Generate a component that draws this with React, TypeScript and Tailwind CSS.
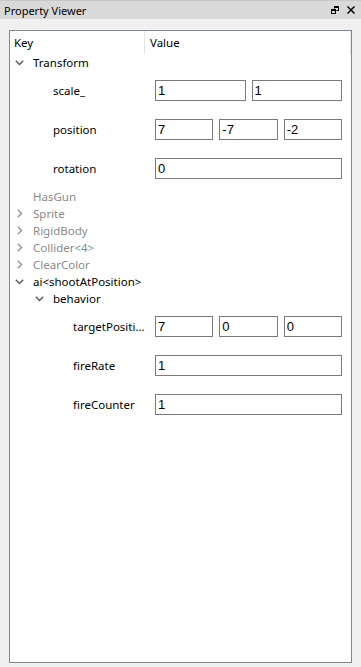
import React from "react";

const FONT = { fontFamily: '"Noto Sans", "Open Sans", sans-serif' };

function ChevDown({ color = "#5a5a5a" }: { color?: string }) {
  return (
    <svg width="9" height="6" viewBox="0 0 9 6" className="block">
      <path d="M0.8 0.8 L4.5 4.5 L8.2 0.8" fill="none" stroke={color} strokeWidth="1.5" />
    </svg>
  );
}
function ChevRight({ color = "#9a9a9a" }: { color?: string }) {
  return (
    <svg width="6" height="9" viewBox="0 0 6 9" className="block">
      <path d="M0.8 0.8 L4.5 4.5 L0.8 8.2" fill="none" stroke={color} strokeWidth="1.5" />
    </svg>
  );
}

type Chev = "down" | "right" | "none";

function TreeRow({ level, chev, label, dim }: { level: number; chev: Chev; label: string; dim?: boolean }) {
  return (
    <div className="flex h-[17px] items-center">
      <div className="flex h-full w-[135px] items-center overflow-hidden" style={{ paddingLeft: level * 20 }}>
        <div className="flex h-full w-[23px] shrink-0 items-center">
          {chev === "down" && (
            <div className="pl-[5px]">
              <ChevDown />
            </div>
          )}
          {chev === "right" && (
            <div className="pl-[7px]">
              <ChevRight />
            </div>
          )}
        </div>
        <span className={`whitespace-nowrap text-[11.5px] leading-none ${dim ? "text-[#8a8a8a]" : "text-black"}`}>
          {label}
        </span>
      </div>
    </div>
  );
}

function Field({ value }: { value: string }) {
  return (
    <div
      className="flex h-[21px] min-w-0 flex-1 items-center border border-[#7a7a7a] bg-white pl-[2px] text-[13px] leading-none text-black"
      style={{ fontFamily: '"Liberation Sans", Arial, sans-serif' }}
    >
      {value}
    </div>
  );
}

function PropRow({ level, label, values }: { level: number; label: string; values: string[] }) {
  return (
    <div className="flex h-[39px] items-center">
      <div className="flex w-[135px] items-center overflow-hidden" style={{ paddingLeft: level * 20 + 23 }}>
        <span className="whitespace-nowrap text-[11.5px] leading-[16px] text-black">{label}</span>
      </div>
      <div className="flex flex-1 gap-[6px] pl-[10px] pr-[9px]">
        {values.map((v, i) => (
          <Field key={i} value={v} />
        ))}
      </div>
    </div>
  );
}

export default function App() {
  return (
    <div className="flex h-[667px] w-[361px] flex-col bg-[#f0f0f0]" style={FONT}>
      <div className="flex h-[19px] shrink-0 items-center justify-between border-t border-[#c8c8c8] bg-[#d9d9d9] pl-[4px] pr-[6px]">
        <span className="text-[11px] leading-none text-black">Property Viewer</span>
        <div className="flex items-center gap-[8px]">
          <svg width="8" height="8" viewBox="0 0 8 8" className="block">
            <rect x="3.5" y="0.5" width="4" height="4" fill="none" stroke="#000" strokeWidth="1" />
            <rect x="3" y="0" width="5" height="2" fill="#000" />
            <rect x="0" y="2.5" width="5.5" height="5.5" fill="#d9d9d9" />
            <rect x="0.5" y="3.5" width="4" height="4" fill="none" stroke="#000" strokeWidth="1" />
            <rect x="0" y="3" width="5" height="2" fill="#000" />
          </svg>
          <svg width="8" height="8" viewBox="0 0 8 8" className="block">
            <path d="M0.5 0.5 L7.5 7.5 M7.5 0.5 L0.5 7.5" stroke="#000" strokeWidth="1.5" />
          </svg>
        </div>
      </div>
      <div className="flex flex-1 px-[9px] pb-[4px] pt-[11px]">
        <div className="flex flex-1 flex-col border border-[#828790] bg-white">
          <div className="flex h-[23px] shrink-0">
            <div className="flex w-[135px] items-center border-r border-[#e5e5e5] pl-[4px] text-[11.5px] text-black">
              Key
            </div>
            <div className="flex flex-1 items-center border-r border-[#e5e5e5] pl-[5px] text-[11.5px] text-black">
              Value
            </div>
          </div>
          <TreeRow level={0} chev="down" label="Transform" />
          <PropRow level={1} label="scale_" values={["1", "1"]} />
          <PropRow level={1} label="position" values={["7", "-7", "-2"]} />
          <PropRow level={1} label="rotation" values={["0"]} />
          <TreeRow level={0} chev="none" label="HasGun" dim />
          <TreeRow level={0} chev="right" label="Sprite" dim />
          <TreeRow level={0} chev="right" label="RigidBody" dim />
          <TreeRow level={0} chev="right" label="Collider<4>" dim />
          <TreeRow level={0} chev="right" label="ClearColor" dim />
          <TreeRow level={0} chev="down" label="ai<shootAtPosition>" />
          <TreeRow level={1} chev="down" label="behavior" />
          <PropRow level={2} label="targetPositi..." values={["7", "0", "0"]} />
          <PropRow level={2} label="fireRate" values={["1"]} />
          <PropRow level={2} label="fireCounter" values={["1"]} />
        </div>
      </div>
    </div>
  );
}
